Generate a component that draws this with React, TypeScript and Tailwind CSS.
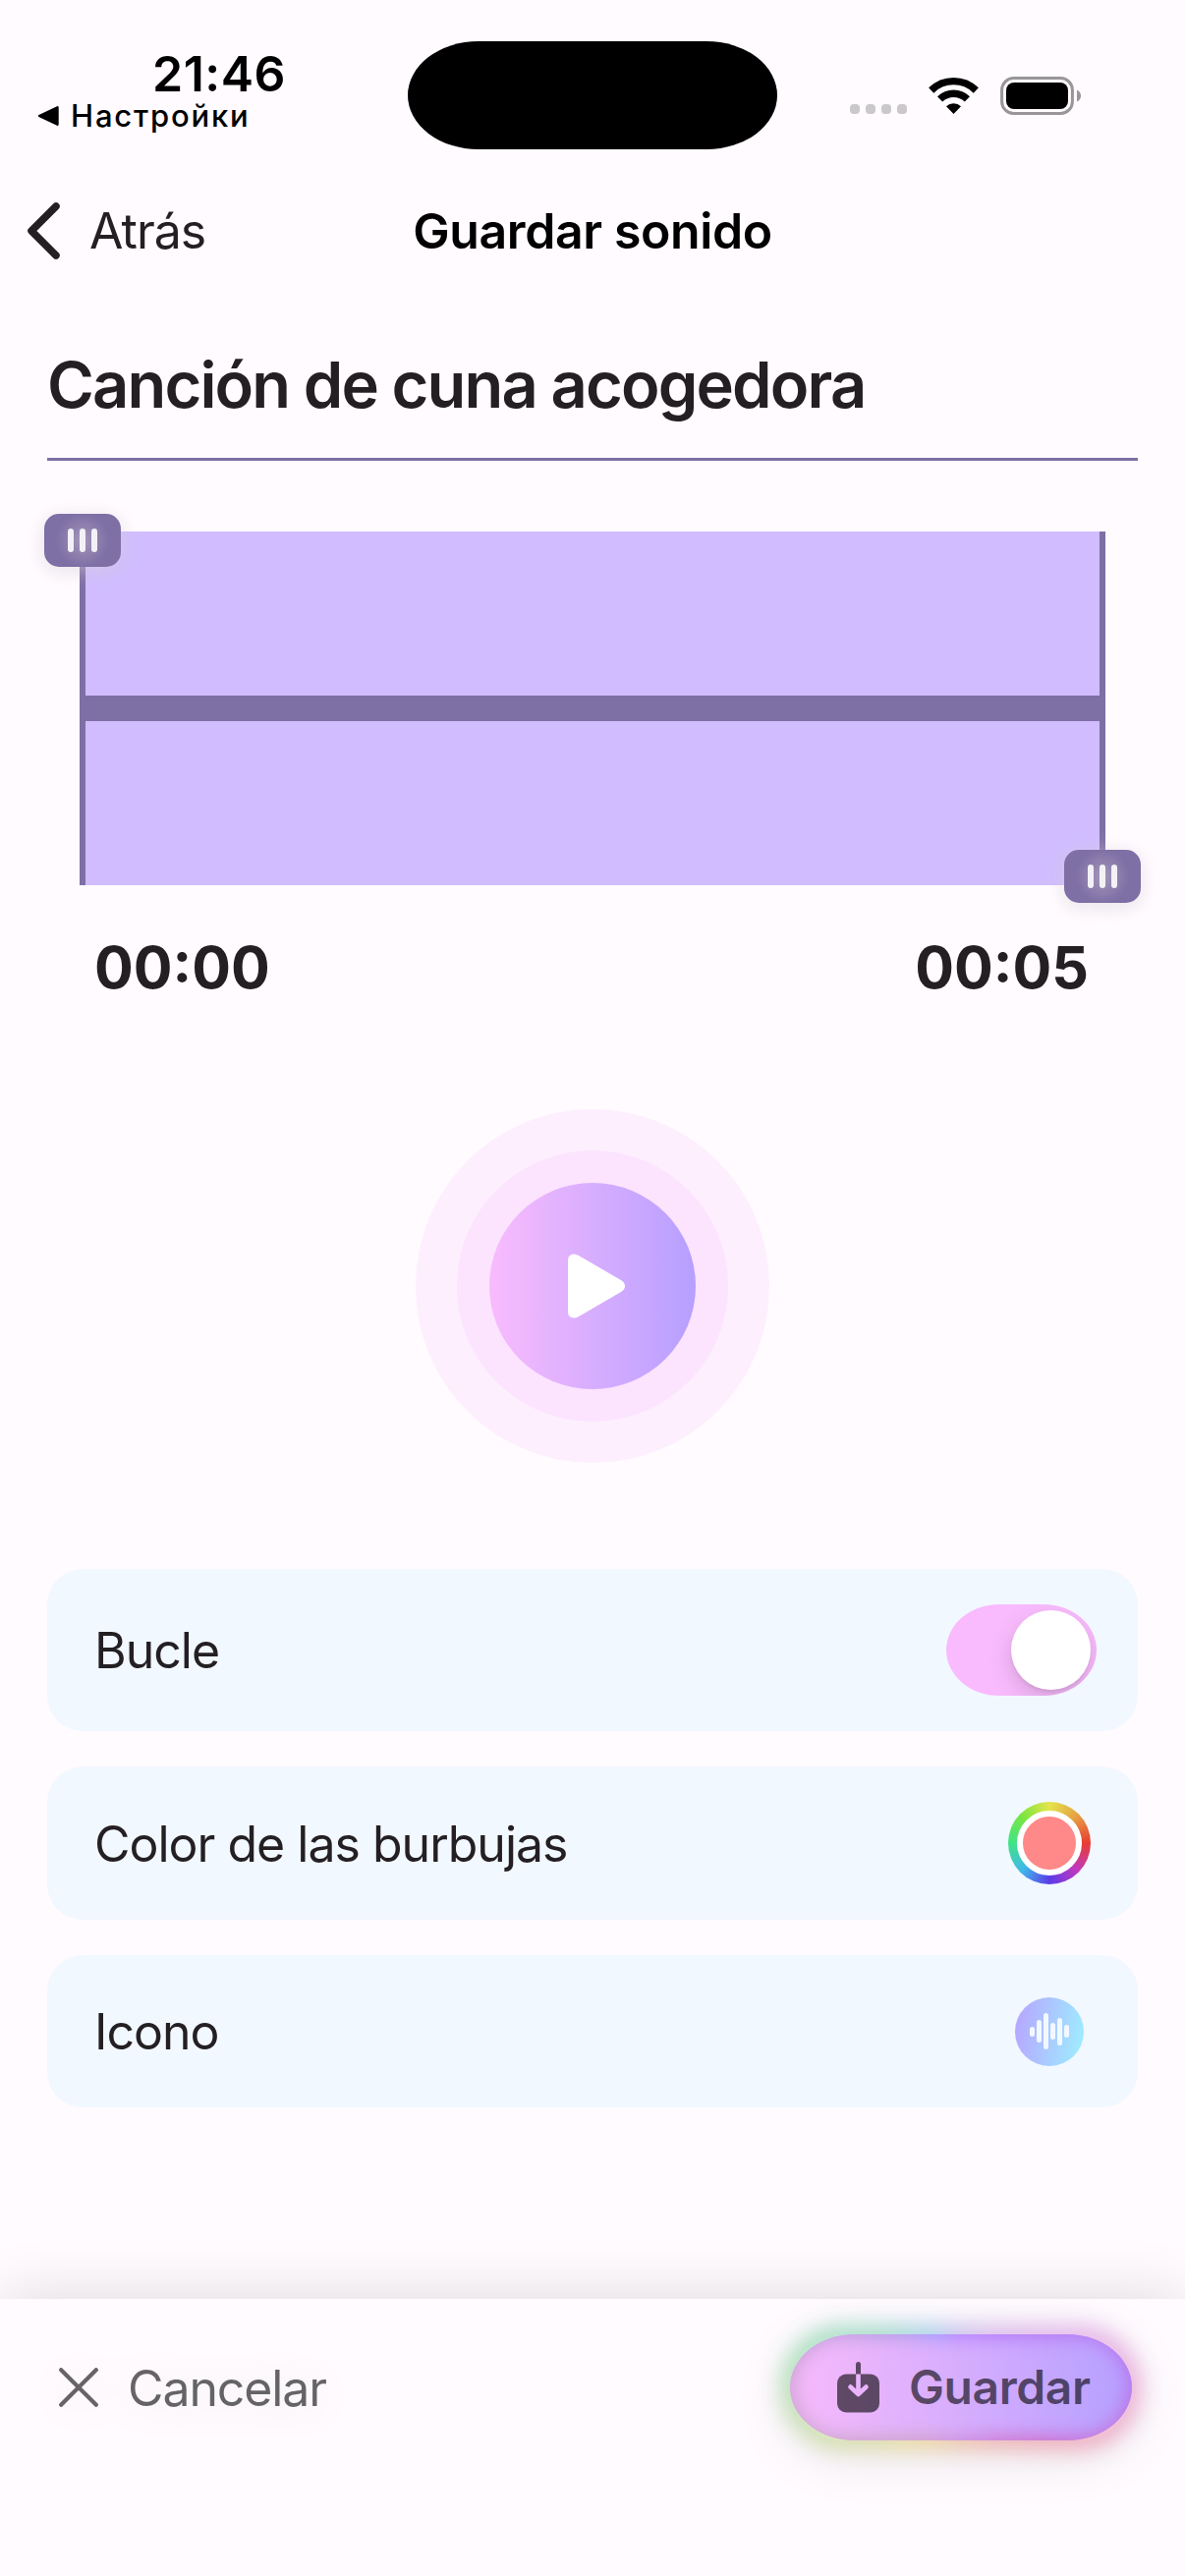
const INK = 'text-[#231f23]';

function StatusBar() {
  return (
    <div className="flex h-[190px] w-full text-black">
      <div className="w-[415px] pt-[50px]">
        <div className="pl-[155px] text-[50px] leading-[50px] font-semibold tracking-[0.5px]">21:46</div>
        <div className="flex items-center pl-[38px] text-[31px] leading-[36px] font-medium">
          <svg width="22" height="22" viewBox="0 0 22 22" className="mr-[12px]">
            <path d="M20 1.2Q21.7.6 21.7 2.4V19.6Q21.7 21.4 20 20.8L2 12.2Q-.6 11 2 9.8Z" fill="black" />
          </svg>
          <span className="tracking-[1.8px]">Настройки</span>
        </div>
      </div>
      <div className="mt-[42px] h-[110px] w-[376px] rounded-[72px/55px] bg-black" />
      <div className="flex h-[110px] items-start pt-[78px] pl-[74px]">
        <div className="mt-[28px] flex gap-[6px]">
          {[0, 1, 2, 3].map((i) => (
            <i key={i} className="size-[10px] rounded-[4px] bg-[#cbc8cb]" />
          ))}
        </div>
        <svg width="51" height="38" viewBox="0 0 51 38" className="ml-[22px]" fill="none" stroke="black" strokeWidth="7.4">
          <path d="M2.7 14A32.5 32.5 0 0 1 48.3 14" />
          <path d="M11.6 22.9A19.8 19.8 0 0 1 39.4 22.9" />
          <path d="M18 30.2A11 11 0 0 1 33 30.2L25.5 38Z" fill="black" stroke="none" />
        </svg>
        <svg width="84" height="40" viewBox="0 0 84 40" className="ml-[22px]">
          <rect x="1.6" y="1.6" width="71.8" height="35.8" rx="12" fill="none" stroke="#989698" strokeWidth="3" />
          <rect x="6" y="6" width="63" height="27" rx="8" fill="black" />
          <path d="M78 13.5Q82 15.5 82 19.5T78 25.5Z" fill="#989698" />
        </svg>
      </div>
    </div>
  );
}

function NavBar() {
  return (
    <div className={`grid h-[90px] grid-cols-[415px_376px_1fr] items-center ${INK}`}>
      <div className="flex items-center pl-[28px]">
        <svg width="34" height="58" viewBox="0 0 34 58" fill="none" stroke="#231f23" strokeWidth="7.5" strokeLinecap="round" strokeLinejoin="round">
          <path d="M29 4L4 29L29 54" />
        </svg>
        <span className="ml-[29px] text-[50px] tracking-[-1px]">Atrás</span>
      </div>
      <div className="text-center text-[50px] font-semibold tracking-[-0.4px] whitespace-nowrap text-black">Guardar sonido</div>
    </div>
  );
}

function Handle() {
  return (
    <div className="flex h-[54px] w-[78px] items-center justify-center gap-[6px] rounded-[15px] bg-[radial-gradient(circle,#a398ba_0%,#8e80ae_32%,#7e6fa5_58%)] shadow-[0_3px_20px_rgba(240,235,240,0.55),0_4px_18px_rgba(0,0,0,0.09)]">
      <i className="h-[24px] w-[6px] rounded-full bg-[#f3f1f6]" />
      <i className="h-[24px] w-[6px] rounded-full bg-[#f3f1f6]" />
      <i className="h-[24px] w-[6px] rounded-full bg-[#f3f1f6]" />
    </div>
  );
}

function Waveform() {
  return (
    <div className="relative mx-[33px] mt-[72px] flex h-[360px] items-center border-x-[6px] border-[#7e6fa5] bg-[#d0bcff]">
      <div className="h-[26px] w-full bg-[#7e6fa5]" />
      <div className="absolute -top-[18px] -left-[42px]">
        <Handle />
      </div>
      <div className="absolute -right-[42px] -bottom-[18px]">
        <Handle />
      </div>
    </div>
  );
}

function PlayButton() {
  return (
    <div className="mx-auto mt-[109px] flex size-[360px] items-center justify-center rounded-full bg-[#fdeffe]">
      <div className="flex size-[276px] items-center justify-center rounded-full bg-[#fce3fe]">
        <div className="flex size-[210px] items-center justify-center rounded-full bg-linear-to-r from-[#f9bbfd] to-[#b69fff]">
          <svg width="58" height="66" viewBox="0 0 58 66" className="ml-[8px]" fill="white">
            <path d="M0 7Q0 .5 6 .5Q8.500 .5 11 2L54 27Q58 29.500 58 33T54 39L11 64Q8.500 65.500 6 65.500Q0 65.500 0 59Z" />
          </svg>
        </div>
      </div>
    </div>
  );
}

const BARS = ['h-[10px]', 'h-[23px]', 'h-[37px]', 'h-[17px]', 'h-[28px]', 'h-[13px]'];

function Settings() {
  const row = 'flex items-center justify-between rounded-[36px] bg-[#f2f8ff] pl-[48px]';
  return (
    <div className={`mt-[108px] flex flex-col gap-[36px] text-[50px] tracking-[-1px] ${INK}`}>
      <div className={`${row} h-[165px] pr-[42px]`}>
        <span className="pt-[2px]">Bucle</span>
        <div className="flex h-[93px] w-[153px] items-center justify-end overflow-hidden rounded-[54px/46.5px] bg-[#f9bbfd] pr-[6px]">
          <div className="size-[81px] rounded-full bg-white shadow-[0_9px_24px_rgba(0,0,0,0.15),0_3px_3px_rgba(0,0,0,0.06)]" />
        </div>
      </div>
      <div className={`${row} h-[156px] pr-[48px]`}>
        <span className="pt-[2px]">Color de las burbujas</span>
        <div className="flex size-[84px] items-center justify-center rounded-full bg-[conic-gradient(#e4e44a,#e5a044_12.5%,#e83d33_25%,#c038c0_37.5%,#5c3ce8_50%,#40b8e8_62.5%,#3fe486_75%,#7be640_87.5%,#e4e44a)]">
          <div className="size-[66px] rounded-full border-[6px] border-white bg-[#ff8888]" />
        </div>
      </div>
      <div className={`${row} h-[155px] pr-[55px]`}>
        <span className="pt-[2px]">Icono</span>
        <div className="flex size-[70px] items-center justify-center gap-[2px] rounded-full bg-[linear-gradient(100deg,#b8a3ff,#9df0ff)]">
          {BARS.map((h) => (
            <i key={h} className={`w-[5px] rounded-full bg-[#f2f8ff] ${h}`} />
          ))}
        </div>
      </div>
    </div>
  );
}

function SaveButton() {
  return (
    <div className="relative isolate h-[108px] w-[348px]">
      <div className="absolute inset-0 -z-20 rounded-full shadow-[0_10px_60px_rgba(0,0,0,0.13)]" />
      <div className="absolute -inset-[10px] -z-10 rounded-full bg-[conic-gradient(from_0deg,#cfc0ee,#e6b8ec_18%,#edb2da_25%,#f0aebc_33%,#f0c2ae_48%,#ecdca2_62%,#d4e0ae_69%,#b0e2bc_77%,#a4decc_84%,#acd0f2_92%,#cfc0ee)] opacity-90 blur-[10px]" />
      <div className="relative h-full overflow-hidden rounded-[66px/54px] bg-[conic-gradient(from_0deg,#b685ff,#b67cf6_15%,#b878ec_25%,#d070cc_34%,#cf92dc_50%,#d2a4c8_62%,#cfa8d0_70%,#d0a4d8_77%,#b8a0e4_84%,#a49aff_93%,#b685ff)]">
        <div className="absolute inset-[5px] rounded-full bg-linear-to-r from-[#f6b9fb] to-[#b6a0ff] blur-[9px]" />
        <div className="relative flex h-full items-center pl-[48px] text-black/60">
          <svg width="43" height="52" viewBox="0 0 43 52">
            <defs>
              <mask id="arrow">
                <rect width="43" height="52" fill="white" />
                <path d="M21.500 12V33M13.500 25.500L21.500 33L29.500 25.500" fill="none" stroke="black" strokeWidth="4.600" strokeLinecap="round" strokeLinejoin="round" />
              </mask>
            </defs>
            <rect y="12.500" width="43" height="39" rx="9" fill="currentColor" mask="url(#arrow)" />
            <path d="M19 12.500V2.500a2.500 2.500 0 0 1 5 0V12.500Z" fill="currentColor" />
          </svg>
          <span className="ml-[30px] text-[48px] font-semibold tracking-[-0.4px]">Guardar</span>
        </div>
      </div>
    </div>
  );
}

function BottomBar() {
  return (
    <div className="flex h-[282px] items-start justify-between bg-[#fffbff] pt-[36px] pr-[54px] pl-[60px] shadow-[0_0_60px_rgba(0,0,0,0.14)]">
      <div className="flex h-[108px] items-center text-black/60 drop-shadow-[0_4px_20px_rgba(0,0,0,0.12)]">
        <svg width="40" height="40" viewBox="0 0 40 40" fill="none" stroke="currentColor" strokeWidth="4.200" strokeLinecap="round">
          <path d="M2.200 2.200L37.800 37.800M37.800 2.200L2.200 37.800" />
        </svg>
        <span className="ml-[30px] pt-[2px] text-[50px] tracking-[-1.1px]">Cancelar</span>
      </div>
      <SaveButton />
    </div>
  );
}

export default function App() {
  return (
    <div className="flex h-[2622px] w-[1206px] flex-col overflow-hidden bg-[#fffbff] font-['Inter',sans-serif]">
      <StatusBar />
      <NavBar />
      <main className="flex-1 px-[48px] pt-[72px]">
        <h1 className={`h-[117px] border-b-[3px] border-[#7e6fa5] text-[65px] leading-[80px] font-semibold tracking-[-1.85px] ${INK}`}>
          Canción de cuna acogedora
        </h1>
        <Waveform />
        <div className={`mt-[49px] flex justify-between pr-[50px] pl-[48px] text-[59px] leading-[70px] font-bold ${INK}`}>
          <span>00:00</span>
          <span>00:05</span>
        </div>
        <PlayButton />
        <Settings />
      </main>
      <BottomBar />
    </div>
  );
}
